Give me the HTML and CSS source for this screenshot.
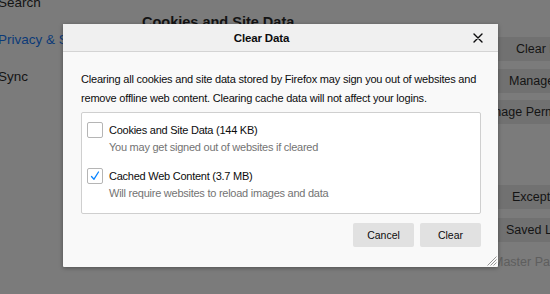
FILE: index.html
```html
<!DOCTYPE html>
<html>
<head>
<meta charset="utf-8">
<link rel="stylesheet" href="styles.css">
</head>
<body>
<div class="page">
  <nav class="sidebar">
    <div class="nav-item">Search</div>
    <div class="nav-item active">Privacy &amp; Security</div>
    <div class="nav-item">Sync</div>
  </nav>
  <main class="main">
    <h2 class="heading">Cookies and Site Data</h2>
    <div class="side-buttons">
      <div class="pbtn b1">Clear Data…</div>
      <div class="pbtn b2">Manage Data…</div>
      <div class="pbtn b3">Manage Permissions…</div>
      <div class="pbtn b4">Exceptions…</div>
      <div class="pbtn b5">Saved Logins…</div>
      <div class="pbtn b6 disabled">Master Password…</div>
    </div>
  </main>
</div>

<div class="dialog">
  <div class="dialog-header">
    <span class="dialog-title">Clear Data</span>
    <span class="close">
      <svg width="10" height="10" viewBox="0 0 10 10"><path d="M1 1L9 9M9 1L1 9" stroke="#0c0c0d" stroke-width="1.4" stroke-linecap="round"/></svg>
    </span>
  </div>
  <div class="dialog-body">
    <p class="desc">Clearing all cookies and site data stored by Firefox may sign you out of websites and<br>remove offline web content. Clearing cache data will not affect your logins.</p>
    <div class="options">
      <div class="option">
        <span class="check"></span>
        <div class="opt-text">
          <div class="opt-label">Cookies and Site Data (144 KB)</div>
          <div class="opt-sub">You may get signed out of websites if cleared</div>
        </div>
      </div>
      <div class="option">
        <span class="check">
          <svg width="12" height="12" viewBox="0 0 12 12"><path d="M2.5 6.5L5 9.2L9.5 2" fill="none" stroke="#0a84ff" stroke-width="1.3" stroke-linecap="round" stroke-linejoin="round"/></svg>
        </span>
        <div class="opt-text">
          <div class="opt-label">Cached Web Content (3.7 MB)</div>
          <div class="opt-sub">Will require websites to reload images and data</div>
        </div>
      </div>
    </div>
    <div class="actions">
      <button class="btn">Cancel</button>
      <button class="btn">Clear</button>
    </div>
  </div>
  <svg class="grip" width="10" height="10" viewBox="0 0 10 10"><path d="M9.5 0.5L0.5 9.5M9.5 3.5L3.5 9.5M9.5 6.5L6.5 9.5" stroke="#8a8a8a" stroke-width="0.9"/></svg>
</div>
</body>
</html>
```

FILE: styles.css
```css
html, body {
  margin: 0;
  padding: 0;
  width: 550px;
  height: 294px;
  overflow: hidden;
  background: #7b7b7b;
  font-family: "Liberation Sans", Arial, sans-serif;
}

.page {
  display: flex;
  height: 294px;
  overflow: hidden;
}

.sidebar {
  width: 142px;
  margin-left: -2px;
  flex: none;
  display: flex;
  flex-direction: column;
  margin-top: -6px;
  gap: 19px;
}

.nav-item {
  font-size: 13.5px;
  line-height: 18px;
  color: #141414;
  white-space: nowrap;
}

.nav-item.active {
  color: #0b3a78;
}

.main {
  flex: 1;
  display: flex;
  flex-direction: column;
  min-width: 0;
}

.heading {
  margin: 13px 0 0 2px;
  font-size: 14.5px;
  line-height: 18px;
  font-weight: bold;
  color: #141414;
  white-space: nowrap;
}

.side-buttons {
  display: flex;
  flex-direction: column;
  align-items: flex-end;
  margin-right: -70px;
  margin-top: 6px;
}

.pbtn {
  box-sizing: border-box;
  height: 24px;
  line-height: 24px;
  font-size: 12.5px;
  color: #141414;
  background: #717171;
  border-radius: 3px;
  white-space: nowrap;
  text-align: left;
  width: 130px;
}

.b1 { padding-left: 26px; }
.b2 { margin-top: 8px; padding-left: 19px; }
.b3 { margin-top: 7px; width: 160px; padding-left: 17px; }
.b4 { margin-top: 61px; padding-left: 22px; }
.b5 { margin-top: 9px; padding-left: 16px; }
.b6 { margin-top: 8px; width: 140px; padding-left: 13px; background: transparent; }
.pbtn.disabled { color: #5e5e5e; }

.dialog {
  position: absolute;
  left: 63px;
  top: 24px;
  width: 435px;
  height: 243px;
  background: #f9f9f9;
  box-shadow: 0 1px 4px rgba(0,0,0,0.35);
  border-radius: 1px;
  display: flex;
  flex-direction: column;
  color: #0c0c0d;
}

.dialog-header {
  height: 27px;
  flex: none;
  background: #f0f0f0;
  border-bottom: 1px solid #d4d4d4;
  display: flex;
  align-items: center;
  justify-content: center;
  padding-right: 38px;
  position: relative;
}

.dialog-title {
  font-size: 11.5px;
  font-weight: bold;
  letter-spacing: -0.15px;
}

.close {
  position: absolute;
  right: 15px;
  top: 9px;
  width: 10px;
  height: 10px;
  display: flex;
}

.dialog-body {
  padding: 18px 17px 0 18px;
  display: flex;
  flex-direction: column;
}

.desc {
  margin: 0;
  font-size: 11px;
  line-height: 19px;
  letter-spacing: -0.2px;
  white-space: nowrap;
}

.options {
  box-sizing: border-box;
  margin-top: 4px;
  height: 102px;
  background: #ffffff;
  border: 1px solid #cfcfcf;
  border-radius: 2px;
  padding: 9px 5px 0;
  display: flex;
  flex-direction: column;
  gap: 12px;
}

.option {
  display: flex;
  align-items: flex-start;
  gap: 6px;
}

.check {
  width: 14px;
  height: 14px;
  border: 1px solid #b5b5b5;
  border-radius: 2px;
  background: #fff;
  flex: none;
  display: flex;
  align-items: center;
  justify-content: center;
}

.opt-text {
  display: flex;
  flex-direction: column;
}

.opt-label {
  font-size: 11px;
  line-height: 17px;
  letter-spacing: -0.25px;
  white-space: nowrap;
}

.opt-sub {
  font-size: 11px;
  line-height: 17px;
  letter-spacing: -0.25px;
  color: #737373;
  white-space: nowrap;
}

.actions {
  display: flex;
  justify-content: flex-end;
  gap: 6px;
  margin-top: 9px;
}

.btn {
  width: 61px;
  height: 24px;
  border: none;
  border-radius: 2px;
  background: #e1e1e1;
  font-family: "Liberation Sans", Arial, sans-serif;
  font-size: 10.5px;
  color: #0c0c0d;
  padding: 0;
}

.grip {
  position: absolute;
  right: 1px;
  bottom: 1px;
}
```
